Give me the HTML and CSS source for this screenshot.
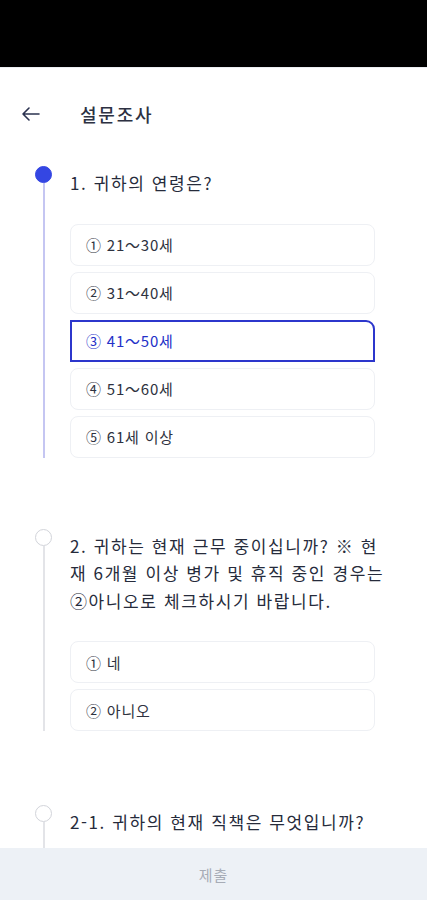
FILE: index.html
```html
<!DOCTYPE html>
<html lang="ko">
<head>
<meta charset="utf-8">
<link rel="stylesheet" href="styles.css">
</head>
<body>
<div class="statusbar"></div>
<header class="header">
  <svg class="back" width="20" height="16" viewBox="0 0 20 16" fill="none" stroke="#2b3350" stroke-width="1.6" stroke-linecap="round" stroke-linejoin="round">
    <path d="M18 8H2M8 2L2 8l6 6"/>
  </svg>
  <h1 class="title">설문조사</h1>
</header>
<main class="steps">
  <section class="step">
    <div class="rail"><span class="dot dot-active"></span><span class="line line-active"></span></div>
    <div class="body">
      <p class="question">1. 귀하의 연령은?</p>
      <div class="options">
        <div class="option">① 21～30세</div>
        <div class="option">② 31～40세</div>
        <div class="option selected">③ 41～50세</div>
        <div class="option">④ 51～60세</div>
        <div class="option">⑤ 61세 이상</div>
      </div>
    </div>
  </section>
  <section class="step">
    <div class="rail"><span class="dot"></span><span class="line"></span></div>
    <div class="body">
      <p class="question">2. 귀하는 현재 근무 중이십니까? ※ 현재 6개월 이상 병가 및 휴직 중인 경우는 ②아니오로 체크하시기 바랍니다.</p>
      <div class="options">
        <div class="option">① 네</div>
        <div class="option">② 아니오</div>
      </div>
    </div>
  </section>
  <section class="step step-last">
    <div class="rail"><span class="dot"></span><span class="line"></span></div>
    <div class="body">
      <p class="question">2-1. 귀하의 현재 직책은 무엇입니까?</p>
    </div>
  </section>
</main>
<footer class="footer">제출</footer>
</body>
</html>
```
FILE: styles.css
```css
* { box-sizing: border-box; }
html, body {
  margin: 0;
  padding: 0;
  background: #ffffff;
  font-family: "Noto Sans CJK KR", "Noto Sans", sans-serif;
  color: #262b3b;
}
.statusbar {
  height: 67px;
  background: #000;
}
.header {
  height: 92px;
  display: flex;
  align-items: center;
  padding-left: 21px;
  border-top: 1px solid #eceef2;
}
.back { display: block; }
.title {
  margin: 0 0 0 39px;
  font-size: 18px;
  font-weight: 500;
  color: #2d3142;
  letter-spacing: 1.8px;
}
.steps {
  display: flex;
  flex-direction: column;
  gap: 66px;
  padding-top: 7px;
}
.step {
  display: grid;
  grid-template-columns: 70px 322px;
  padding-bottom: 5px;
}
.step-last { min-height: 200px; margin-top: 3px; }
.rail {
  display: flex;
  flex-direction: column;
  align-items: center;
  width: 17px;
  margin-left: 35px;
}
.dot {
  width: 17px;
  height: 17px;
  border-radius: 50%;
  border: 1.5px solid #d2d4da;
  background: #fff;
  flex: none;
}
.dot-active {
  background: #3446e3;
  border-color: #3446e3;
}
.line {
  flex: 1;
  width: 2px;
  background: #e3e4e8;
}
.line-active { background: #c5c6f2; }
.question {
  margin: 3px 0 0;
  font-size: 17px;
  line-height: 27.5px;
  letter-spacing: 1.6px;
  color: #262b3b;
}
.options {
  display: flex;
  flex-direction: column;
  gap: 6px;
  margin-top: 27px;
  width: 305px;
}
.option {
  height: 42px;
  display: flex;
  align-items: center;
  padding-left: 15px;
  border: 1px solid #eef0f4;
  border-radius: 8px;
  font-size: 15px;
  letter-spacing: 0.8px;
  color: #2e3240;
}
.option.selected {
  border: 2px solid #2c36cc;
  border-radius: 0 9px 0 0;
  padding-left: 14px;
  color: #2330c8;
}
.footer {
  position: fixed;
  left: 0;
  right: 0;
  bottom: 0;
  height: 52px;
  background: #edf1f6;
  display: flex;
  align-items: center;
  justify-content: center;
  font-size: 15px;
  letter-spacing: 1px;
  color: #a7acb6;
}
```
